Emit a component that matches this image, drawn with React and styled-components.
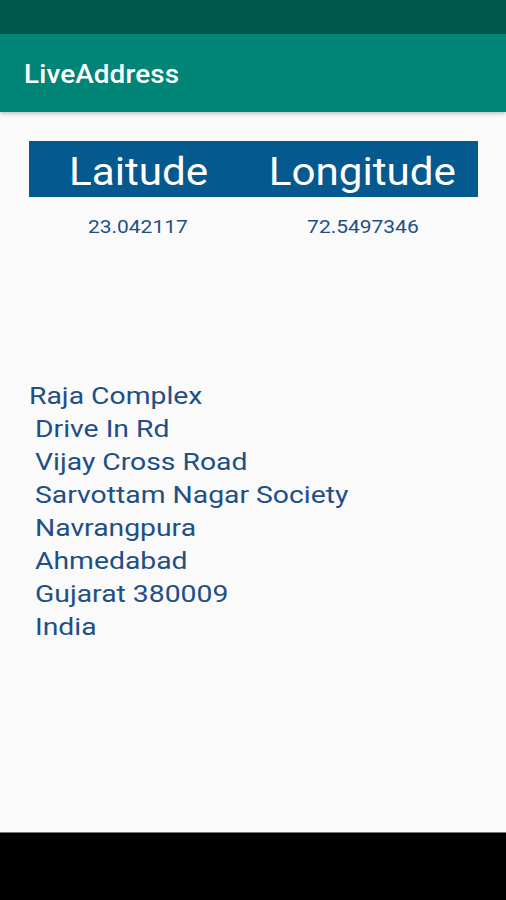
import React from "react";
import styled, { createGlobalStyle } from "styled-components";

const Global = createGlobalStyle`
  html, body { margin: 0; padding: 0; }
  body { font-family: Roboto, "Noto Sans", sans-serif; background: #fafafa; }
`;

const Screen = styled.div`
  width: 506px;
  height: 900px;
  display: flex;
  flex-direction: column;
  background: #fafafa;
  overflow: hidden;
`;

const StatusBar = styled.div`
  height: 34px;
  background: #00574b;
  flex-shrink: 0;
`;

const AppBar = styled.div`
  height: 78px;
  background: #008577;
  display: flex;
  align-items: center;
  padding-left: 24px;
  padding-top: 2px;
  box-sizing: border-box;
  flex-shrink: 0;
  box-shadow: 0 2px 4px rgba(0, 0, 0, 0.22);
  position: relative;
  z-index: 1;
`;

/* The screenshot's glyphs are horizontally wider than Roboto renders; stretch text to match. */
const Wide = styled.span`
  display: inline-block;
  transform: scaleX(${(p) => p.$sx || 1});
  transform-origin: ${(p) => p.$origin || "center"} center;
  white-space: pre;
`;

const Title = styled.h1`
  margin: 0;
  color: #ffffff;
  font-family: Roboto, sans-serif;
  font-weight: 500;
  font-size: 25px;
  letter-spacing: 0.1px;
`;

const Content = styled.main`
  flex: 1;
  padding: 29px 28px 0 29px;
  display: flex;
  flex-direction: column;
`;

const Grid = styled.div`
  display: grid;
  grid-template-columns: 1fr 1fr;
`;

const HeaderRow = styled(Grid)`
  height: 56px;
  background: #04598f;
  align-items: center;
`;

const HeaderCell = styled.div`
  text-align: center;
  color: #ffffff;
  font-size: 38px;
  font-weight: 400;
  line-height: 56px;
  padding-top: 3px;
  margin-left: -6px;
`;

const ValueRow = styled(Grid)`
  margin-top: 19px;
`;

const ValueCell = styled.div`
  text-align: center;
  color: #1f4f85;
  font-size: 18px;
  line-height: 22px;
  margin-left: -6px;
`;

const Address = styled.div`
  margin-top: 142px;
  color: #1f4f85;
  font-size: 24px;
  line-height: 33px;
  display: flex;
  flex-direction: column;
  align-items: flex-start;
`;

const AddressLine = styled.div`
  padding-left: ${(p) => (p.$indent ? 6 : 0)}px;
`;

const NavBar = styled.div`
  height: 67px;
  background: #000000;
  border-top: 1px solid #777;
  flex-shrink: 0;
`;

const lines = [
  "Raja Complex",
  "Drive In Rd",
  "Vijay Cross Road",
  "Sarvottam Nagar Society",
  "Navrangpura",
  "Ahmedabad",
  "Gujarat 380009",
  "India",
];

export default function App() {
  return (
    <Screen>
      <Global />
      <StatusBar />
      <AppBar>
        <Title>
          <Wide $sx={1.115} $origin="left">LiveAddress</Wide>
        </Title>
      </AppBar>
      <Content>
        <HeaderRow>
          <HeaderCell>
            <Wide $sx={1.11}>Laitude</Wide>
          </HeaderCell>
          <HeaderCell>
            <Wide $sx={1.11}>Longitude</Wide>
          </HeaderCell>
        </HeaderRow>
        <ValueRow>
          <ValueCell>
            <Wide $sx={1.165}>23.042117</Wide>
          </ValueCell>
          <ValueCell>
            <Wide $sx={1.165}>72.5497346</Wide>
          </ValueCell>
        </ValueRow>
        <Address>
          {lines.map((l, i) => (
            <AddressLine key={l} $indent={i > 0}>
              <Wide $sx={1.18} $origin="left">{l}</Wide>
            </AddressLine>
          ))}
        </Address>
      </Content>
      <NavBar />
    </Screen>
  );
}
